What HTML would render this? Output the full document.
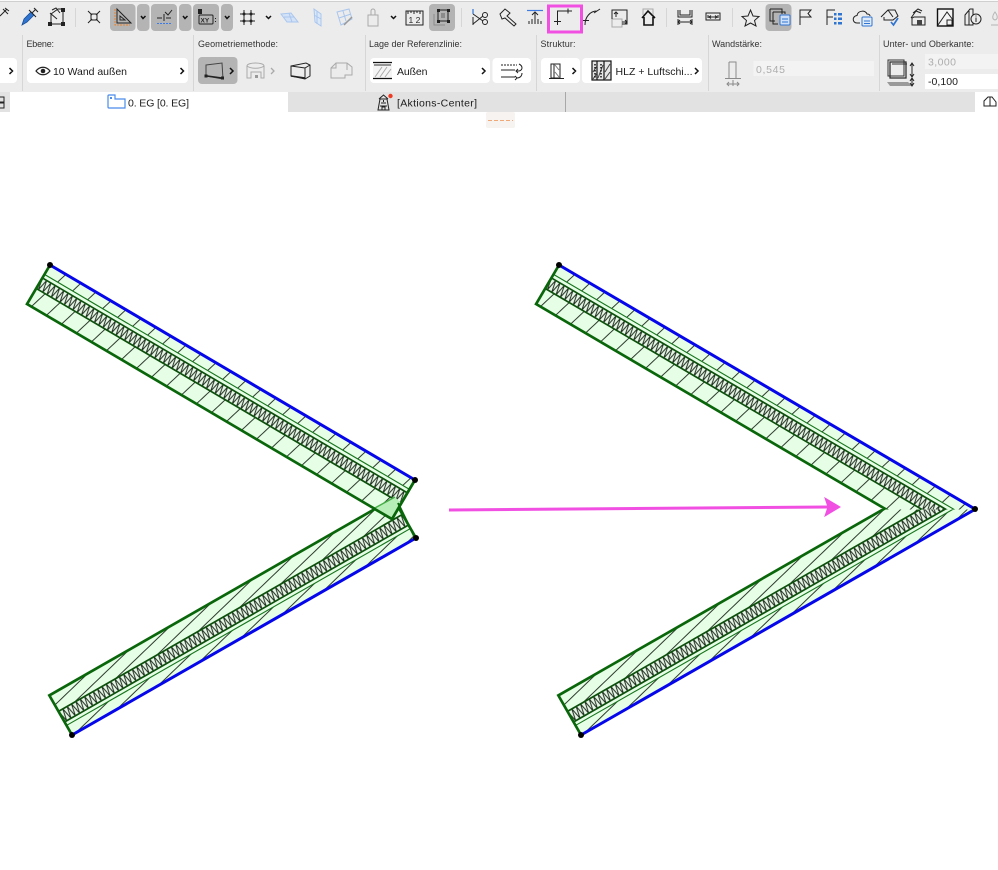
<!DOCTYPE html>
<html lang="de"><head><meta charset="utf-8"><title>Wand</title>
<style>
html,body{margin:0;padding:0;background:#fff;width:998px;height:870px;overflow:hidden}
svg{display:block;position:absolute;left:0;top:0;filter:blur(.28px)}
text{font-family:"Liberation Sans",sans-serif;fill:#2a2a2a}
.l{font-size:9px;fill:#333}
.v{font-size:10.5px;fill:#1c1c1c}
.i{fill:none;stroke:#222;stroke-width:1}
.g{fill:none;stroke:#aaa;stroke-width:1}
.b{fill:none;stroke:#a9c6ee;stroke-width:1}
.c{fill:none;stroke:#111;stroke-width:1.5}
</style></head><body>
<svg width="998" height="870" viewBox="0 0 998 870" xmlns="http://www.w3.org/2000/svg">
<defs>
<pattern id="hu" patternUnits="userSpaceOnUse" width="16.7" height="10" patternTransform="rotate(16.5)"><path d="M1,-1V11" stroke="#2c3c2c" stroke-width="1"/></pattern>
<pattern id="hl" patternUnits="userSpaceOnUse" width="11.5" height="10" patternTransform="rotate(76)"><path d="M1,-1V11" stroke="#2c3c2c" stroke-width="1"/></pattern>
<pattern id="zu" patternUnits="userSpaceOnUse" x="0" y="15" width="5" height="12.2"><rect width="5" height="12.2" fill="#e8f6e8"/><path d="M0,0L2.5,12.2L5,0" fill="none" stroke="#1c2c1c" stroke-width="1"/></pattern>
<pattern id="zl" patternUnits="userSpaceOnUse" x="0" y="-27.2" width="5" height="12.2"><rect width="5" height="12.2" fill="#e8f6e8"/><path d="M0,0L2.5,12.2L5,0" fill="none" stroke="#1c2c1c" stroke-width="1"/></pattern>
<clipPath id="cu"><rect x="500" y="200" width="498" height="309.5"/></clipPath>
<clipPath id="cl"><rect x="500" y="509" width="498" height="300"/></clipPath>
</defs>

<!-- toolbar backgrounds -->
<rect width="998" height="92" fill="#ececec"/>
<rect width="998" height="1.5" fill="#fafafa"/>
<rect y="1" width="998" height="1" fill="#cfcfcf"/>
<rect y="92" width="998" height="20" fill="#e2e2e2"/>
<rect x="10" y="92" width="278" height="20" fill="#fff"/>
<rect x="975" y="92" width="23" height="20" fill="#fff"/>
<rect x="565" y="92" width="1" height="20" fill="#a8a8a8"/>
<g fill="#d6d6d6"><rect x="22" y="35" width="1" height="56"/><rect x="193" y="35" width="1" height="56"/><rect x="365" y="35" width="1" height="56"/><rect x="536" y="35" width="1" height="56"/><rect x="708" y="35" width="1" height="56"/><rect x="879" y="35" width="1" height="56"/><rect x="75" y="8" width="1" height="19"/><rect x="461" y="8" width="1" height="19"/><rect x="666" y="8" width="1" height="19"/><rect x="732" y="8" width="1" height="19"/></g>

<!-- active buttons -->
<g fill="#b4b4b4"><rect x="110" y="4" width="25.5" height="27" rx="4"/><rect x="137" y="4" width="12.5" height="27" rx="4"/><rect x="151" y="4" width="26" height="27" rx="4"/><rect x="179" y="4" width="12.5" height="27" rx="4"/><rect x="193" y="4" width="26" height="27" rx="4"/><rect x="221" y="4" width="12" height="27" rx="4"/><rect x="429" y="4" width="26" height="27" rx="4"/><rect x="765.500" y="4" width="26" height="27" rx="4"/><rect x="198" y="57" width="39.500" height="27" rx="4"/></g>

<!-- white fields -->
<g fill="#fff"><rect x="-6" y="58" width="23" height="25" rx="4"/><rect x="27" y="58" width="161" height="25" rx="4"/><rect x="370" y="58" width="120" height="25" rx="4"/><rect x="492.500" y="58" width="38.500" height="25" rx="4"/><rect x="541" y="58" width="39" height="25" rx="4"/><rect x="582" y="58" width="120" height="25" rx="4"/><rect x="925" y="74" width="73" height="15"/></g>
<rect x="753.500" y="61" width="120.500" height="15" fill="#f3f3f3"/>
<rect x="925" y="54" width="73" height="15" fill="#f3f3f3"/>

<!-- toolbar row 1 icons -->
<path class="i" d="M0,16L7,9M3,9L8,14M5,8L9,11"/>
<path d="M22,25L24,19L31,12L34,15L27,22Z" fill="#2f74d0" stroke="#1a4f99" stroke-width=".8"/><path class="i" d="M29,10L36,17M32,13L36,9M34,8L38,12"/>
<path class="i" d="M51,24V14L58,9H63V24ZM50,13L57,19M52,10L56,8L60,13"/><g fill="#222"><rect x="48" y="22" width="4" height="4"/><rect x="61" y="22" width="4" height="4"/><rect x="61" y="8" width="4" height="4"/></g>
<path class="i" d="M91,14H97V20H91ZM88,11L92,15M100,11L96,15M88,23L92,19M100,23L96,19"/>
<path d="M115,9V25H130" fill="none" stroke="#e8842c" stroke-width="1" stroke-dasharray="2 1"/><path class="i" d="M117,9V23H131ZM120,16V20H125Z" stroke-width="1.1"/>
<path class="c" d="M141,16L143,18.500L145.500,16M183,16L185,18.500L187.500,16M225,16L227,18.500L229.500,16"/>
<path class="i" d="M157,18H162M164,14V21M166,18H171M165,12L168,15L172,10"/><path d="M157,23.500H171" stroke="#3f7be0" stroke-dasharray="2 1" fill="none"/>
<path d="M198,9H202V14H198Z" fill="#222"/><rect x="199" y="15" width="14" height="9" rx="1" class="i"/><text x="200.500" y="22.500" style="font-size:6.500px;font-weight:bold">XY</text><path d="M215.500,18v1M215.500,21v1" stroke="#222"/>
<path class="i" d="M240,14H255M240,21H255M244,10V25M251,10V25"/><g fill="#222"><circle cx="244" cy="14" r="1.500"/><circle cx="251" cy="14" r="1.500"/><circle cx="244" cy="21" r="1.500"/><circle cx="251" cy="21" r="1.500"/></g>
<path class="c" d="M266,16L268.500,18.500L271,16M391,16L393.500,18.500L396,16"/>
<path d="M281,14L291,13L298,22H287Z" fill="#d3e2f6" stroke="#a9c6ee"/><path class="b" d="M284,17H294M289,13L292,22"/>
<path d="M314,9L321,14V26L315,22Z" fill="#dbe8f8" stroke="#a9c6ee"/><path class="b" d="M317,11V24M314,15L321,19"/>
<path class="b" d="M337,12L349,9L352,19L341,25ZM343,11L346,21M339,18L351,14"/><path d="M344,25L352,17" stroke="#999" stroke-width="1.500"/>
<path class="g" d="M368,15H378V26H368ZM371,15V11A2,2 0 0 1 375,11V15"/>
<rect x="406" y="11" width="17" height="14" class="i"/><path class="i" d="M408,11v3M411,11v2M414,11v3M417,11v2M420,11v3"/><text x="408.500" y="23" style="font-size:8.500px">1 2</text>
<path d="M434,14V25H445" fill="none" stroke="#8c8c8c"/><path class="i" d="M438,10H448V21H438Z"/><g fill="#222"><rect x="437" y="9" width="3" height="3"/><rect x="447" y="9" width="3" height="3"/><rect x="437" y="20" width="3" height="3"/><rect x="447" y="20" width="3" height="3"/></g><rect x="441" y="13" width="4" height="5" fill="#8c8c8c"/>
<path d="M473,9V14" stroke="#2f74d0" stroke-width="1.200"/><path class="i" d="M473,17V25M473,14L483,21M473,24L483,16"/><circle cx="485" cy="15" r="2.500" class="i"/><circle cx="485" cy="22" r="2.500" class="i"/>
<path class="i" d="M500,14L505,9L510,13L507,16L516,24L514,26L505,18L502,19Z"/>
<path d="M527,10.500H543" stroke="#3f7be0" stroke-width="1.200"/><path class="i" d="M535,24V12M532,15L535,12L538,15M529,24V21M532,24V19M538,24V19M541,24V21"/>
<path class="i" d="M557.500,25V11H572M568,8.500V13.500M554,21.500H561"/>
<path class="i" d="M585,25C585,17 590,11 597,11M600,9L594,13M583,20.500H589" stroke-width="1"/>
<path class="g" d="M612,19H622V27H612Z"/><path class="i" d="M612,19V10H627V24H622M616,17V12M614,14L616,12L618,14M622,22H627M625,20L627,22L625,24" stroke="#444"/>
<path d="M642,18L648,11L655,18M644,17V25H653V17" fill="none" stroke="#111" stroke-width="1.600"/><path class="g" d="M643,15V9H653V15"/>
<path class="i" d="M678,10V17H692V10M680,10V15H690V10M678,19V25M692,19V25M678,22H692M680,20L678,22L680,24M690,20L692,22L690,24"/>
<path class="i" d="M706,13H720V20H706ZM708,15V18M718,15V18M709,17H717M711,15.500L709,17L711,18.500M715,15.500L717,17L715,18.500" stroke-width="1.200"/>
<path class="i" d="M750.500,10L753,16L759,16.500L754.500,20.500L756,26L750.500,23L745,26L746.500,20.500L742,16.500L748,16Z" stroke-width="1.100"/>
<path class="i" d="M770,9H782V14M770,9V21H775" stroke="#444"/><path class="i" d="M773,12H785V14M773,12V24H778" stroke="#444"/><rect x="780" y="15" width="10" height="10" rx="1" fill="#cfe0f8" stroke="#2f74d0"/><path d="M782,19H788M782,22H788" stroke="#2f74d0"/>
<path class="i" d="M800,25V10H811L808,13.500L811,17H800"/>
<path class="i" d="M827,25V10H835M827,17H833"/><g fill="#2f74d0"><rect x="834" y="13" width="2.500" height="2.500"/><rect x="838" y="13" width="4" height="2.500"/><rect x="834" y="17.500" width="2.500" height="2.500"/><rect x="838" y="17.500" width="4" height="2.500"/><rect x="834" y="22" width="2.500" height="2.500"/><rect x="838" y="22" width="4" height="2.500"/></g>
<path class="i" d="M860,23H857C852,23 852,16 857,15.500C858,10 866,10 867,14C869,14 870,15 870,16" stroke-width="1.100"/><rect x="862" y="17" width="10" height="9" rx="1" fill="#e0ebfa" stroke="#2f74d0"/><path d="M864,21H870M864,23.500H870" stroke="#2f74d0"/>
<path class="i" d="M881,17L888,10H895L898,16L893,20H884V17M888,10L893,17" stroke-width="1.100"/><path d="M891,22L893.500,25L898,18" stroke="#2f74d0" stroke-width="1.700" fill="none"/>
<path class="i" d="M911,18L916,11L921,13M913,13L918,9L922,11M912,18V25H925V17H914Z" stroke-width="1.100"/><rect x="917" y="20" width="5" height="5" fill="#444"/>
<rect x="937.500" y="9" width="15.500" height="17" fill="#f4f4f4" stroke="#111" stroke-width="1.400"/><path class="i" d="M938,25L947,12L953,20M947,20H952V25H947Z"/>
<path class="i" d="M965,15L970,9H973V25H965ZM969,11V25" stroke-width="1.100"/><circle cx="976" cy="19" r="5" fill="#ececec" stroke="#222"/><path d="M976,17.500V22M976,15.500V16.500" stroke="#222"/>
<path d="M995,12C992,16 992,19 995,20C998,19 998,16 995,12ZM991,25H998" fill="none" stroke="#b5b5b5"/>

<!-- highlight -->
<rect x="548.500" y="6" width="33" height="26" fill="none" stroke="#f04fe2" stroke-width="3"/>

<!-- labels -->
<text class="l" x="26.500" y="47" textLength="27.500">Ebene:</text>
<text class="l" x="198" y="47" textLength="80">Geometriemethode:</text>
<text class="l" x="369" y="47" textLength="93">Lage der Referenzlinie:</text>
<text class="l" x="540.500" y="47" textLength="35">Struktur:</text>
<text class="l" x="712" y="47" textLength="50">Wandstärke:</text>
<text class="l" x="883" y="47" textLength="91">Unter- und Oberkante:</text>

<!-- row 2 -->
<path class="c" d="M9.500,68L12.500,71L9.500,74M180.500,68L183.500,71L180.500,74M230,68L233,71L230,74M482,68L485,71L482,74M572.500,68L575.500,71L572.500,74M695,68L698,71L695,74"/>
<path d="M36,71C40,66 46,66 50,71C46,76 40,76 36,71Z" fill="none" stroke="#222" stroke-width="1.200"/><circle cx="43" cy="71" r="2.300" fill="#222"/>
<text class="v" x="53" y="75" textLength="74">10 Wand außen</text>
<path d="M206,65L222,63L223,79L206,76Z" fill="none" stroke="#444"/><rect x="204.500" y="74.500" width="3" height="3" fill="#222"/><rect x="221" y="76.500" width="3" height="3" fill="#222"/><path d="M207,76L222,78" stroke="#222" stroke-width="1.500"/>
<path class="g" d="M247,66C247,62 264,62 264,66V78H261V72H251V78H247ZM247,66C251,69 260,69 264,66"/><rect x="255" y="75" width="3" height="3" fill="#999"/><path d="M271,68L274,71L271,74" fill="none" stroke="#aaa" stroke-width="1.300"/>
<path class="i" d="M291,66L306,63L310,65V76L305,79L291,76ZM305,68V79M291,66L305,68L310,65" stroke="#444"/><path d="M291,76L305,78" stroke="#222" stroke-width="1.500"/>
<path class="g" d="M331,68L336,63H347L352,67V75H345V78H331ZM336,63V68H331M347,63V70"/>
<rect x="373" y="62" width="19" height="17" fill="#f4f4f4"/><path d="M373,62.500H392M373,78.500H392" stroke="#111" stroke-width="1.200"/><path d="M374,65H391" stroke="#333"/><path d="M375,77L382,67M380,77L387,67M385,77L391,69" stroke="#aaa"/>
<text class="v" x="397" y="75" textLength="30.500">Außen</text>
<path class="i" d="M501,65H517" stroke-dasharray="2 1"/><path class="i" d="M501,70H515M501,77H515"/><path class="i" d="M519,64C523,66 523,70 519,71L516,71M518,69L516,71L518,73M517,78C520,78 522,76 522,73M515,76L517,78L515,80" stroke-width="1"/>
<path class="i" d="M551,64H560V78H551ZM554,64V78M549,78.500H564" stroke="#222"/><path d="M555,65L559,70M555,72L559,77" stroke="#777"/>
<rect x="592" y="61" width="19" height="19" fill="#e6e6e6" stroke="#111" stroke-width="1.200"/><path d="M597,61V80M604,61V80" stroke="#111" stroke-width="1.200"/><path d="M593,72L597,66M593,79L597,73M598,78L603,65M605,72L610,64M605,79L610,72" stroke="#444"/><path d="M595,64V78M601,64V78" stroke="#111" stroke-dasharray="1.500 1.500" stroke-width="1.500"/>
<text class="v" x="615.500" y="75" textLength="77">HLZ + Luftschi...</text>
<path d="M729,62H736V78M729,62V78M725,78.500H741" fill="none" stroke="#8a8a8a"/><path d="M727,84H739M729,82L727,84L729,86M737,82L739,84L737,86M733,80V86" fill="none" stroke="#8a8a8a"/>
<text class="v" x="756" y="73" textLength="29" style="fill:#adadad">0,545</text>
<path d="M888,60H904V76H888ZM892,64H907" fill="none" stroke="#333"/><rect x="890" y="62" width="16" height="16" fill="none" stroke="#333" stroke-width="1.300"/><path d="M887,82H908L912,86H890Z" fill="#9a9a9a"/><path d="M912,64V76M910,66L912,63L914,66M910,74L912,77L914,74M912,79V85M910,81L912,78L914,81M910,83L912,86L914,83" fill="none" stroke="#222"/>
<text class="v" x="928" y="65.500" textLength="28" style="fill:#adadad">3,000</text>
<text class="v" x="928" y="85" textLength="30">-0,100</text>

<!-- tabs -->
<path class="i" d="M-2,97H4V102H-2ZM-2,103H4V108H-2Z" stroke="#555"/>
<path d="M109,95H115V99H125V108H109Q108,108 108,107V96Q108,95 109,95Z" fill="#fff" stroke="#4a8bea" stroke-width="1.200"/><rect x="110" y="97" width="2" height="2" fill="#4a8bea"/>
<text class="v" x="128" y="106.500" textLength="61">0. EG [0. EG]</text>
<path class="i" d="M380,99H387L389,110H378ZM379,99L383.500,95L388,99M381,103H386M380,106H387M383.500,100V102M382,110V107H385V110" stroke="#222"/><circle cx="390.500" cy="96" r="2.200" fill="#ee3b24"/>
<text class="v" x="397" y="106.500" textLength="80">[Aktions-Center]</text>
<path class="i" d="M984,106V101L988,97H992L996,102V106ZM990,97V106" stroke="#333"/>

<!-- divider handle -->
<rect x="486" y="112" width="29" height="16" rx="2" fill="#f6f3f0"/>
<path d="M488,120.500H513" stroke="#f0a878" stroke-width="1" stroke-dasharray="4 2"/>

<!-- LEFT lower wall -->
<g transform="translate(72,735) rotate(-29.800)">
<rect x="0" y="-45.600" width="396.400" height="45.600" fill="#e6fde6"/>
<rect x="0" y="-45.600" width="396.400" height="18.400" fill="url(#hl)"/>
<rect x="0" y="-11" width="396.400" height="11" fill="url(#hl)"/>
<rect x="0" y="-27.200" width="396.400" height="12.200" fill="url(#zl)"/>
<path d="M0,-27.200H396.400M0,-15H396.400" stroke="#0c500c" stroke-width="1.700"/>
<path d="M0,-11H396.400" stroke="#14741a" stroke-width="1.100"/>
<path d="M0,0V-45.600H396.400V0" fill="none" stroke="#0a660a" stroke-width="2.700"/>
<path d="M0,0H396.400" stroke="#0606ea" stroke-width="3"/>
</g>
<!-- LEFT upper wall -->
<g transform="translate(50,265) rotate(30.500)">
<rect x="0" y="0" width="423.600" height="45.300" fill="#e6fde6"/>
<rect x="0" y="27.200" width="423.600" height="18.100" fill="url(#hu)"/>
<rect x="0" y="0" width="423.600" height="10.900" fill="url(#hu)"/>
<rect x="0" y="15" width="423.600" height="12.200" fill="url(#zu)"/>
<path d="M0,27.200H423.600M0,15H423.600" stroke="#0c500c" stroke-width="1.700"/>
<path d="M0,10.900H423.600" stroke="#14741a" stroke-width="1.100"/>
<path d="M0,0V45.300H423.600V0" fill="none" stroke="#0a660a" stroke-width="2.700"/>
<path d="M0,0H423.600" stroke="#0606ea" stroke-width="3"/>
</g>
<path d="M373,509L395,497L402,504L392,519Z" fill="#b8eeb8"/>
<path d="M373,509L395,497" stroke="#46b046" stroke-width="1.500"/>
<path d="M415,480L392,519L373,508" fill="none" stroke="#0a660a" stroke-width="2.700"/>
<path d="M398,503L415,538" stroke="#0a660a" stroke-width="2" fill="none"/>

<!-- RIGHT lower wall -->
<g clip-path="url(#cl)"><g transform="translate(581,735) rotate(-29.800)">
<rect x="0" y="-45.600" width="454" height="45.600" fill="#e6fde6"/>
<rect x="0" y="-45.600" width="454" height="18.400" fill="url(#hl)"/>
<rect x="0" y="-11" width="454" height="11" fill="url(#hl)"/>
<rect x="0" y="-27.200" width="454" height="12.200" fill="url(#zl)"/>
<path d="M0,-27.200H454M0,-15H454" stroke="#0c500c" stroke-width="1.700"/>
<path d="M0,-11H454" stroke="#14741a" stroke-width="1.100"/>
<path d="M0,0V-45.600H454" fill="none" stroke="#0a660a" stroke-width="2.700"/>
<path d="M0,0H454" stroke="#0606ea" stroke-width="3"/>
</g></g>
<!-- RIGHT upper wall -->
<g clip-path="url(#cu)"><g transform="translate(559,265) rotate(30.400)">
<rect x="0" y="0" width="482" height="45.300" fill="#e6fde6"/>
<rect x="0" y="27.200" width="482" height="18.100" fill="url(#hu)"/>
<rect x="0" y="0" width="482" height="10.900" fill="url(#hu)"/>
<rect x="0" y="15" width="482" height="12.200" fill="url(#zu)"/>
<path d="M0,27.200H482M0,15H482" stroke="#0c500c" stroke-width="1.700"/>
<path d="M0,10.900H482" stroke="#14741a" stroke-width="1.100"/>
<path d="M0,0V45.300H482" fill="none" stroke="#0a660a" stroke-width="2.700"/>
<path d="M0,0H482" stroke="#0606ea" stroke-width="3"/>
</g></g>

<!-- endpoints -->
<g fill="#000"><circle cx="50" cy="265" r="3"/><circle cx="415" cy="480" r="3"/><circle cx="416" cy="538" r="3"/><circle cx="72" cy="735" r="3"/><circle cx="559" cy="265" r="3"/><circle cx="975" cy="509" r="3"/><circle cx="581" cy="735" r="3"/></g>

<!-- arrow -->
<path d="M449,510L828,507" stroke="#f04fe2" stroke-width="3" fill="none"/>
<path d="M825,498L840,507L825,516L828,507Z" fill="#f04fe2" stroke="#f04fe2"/>
</svg>
</body></html>
